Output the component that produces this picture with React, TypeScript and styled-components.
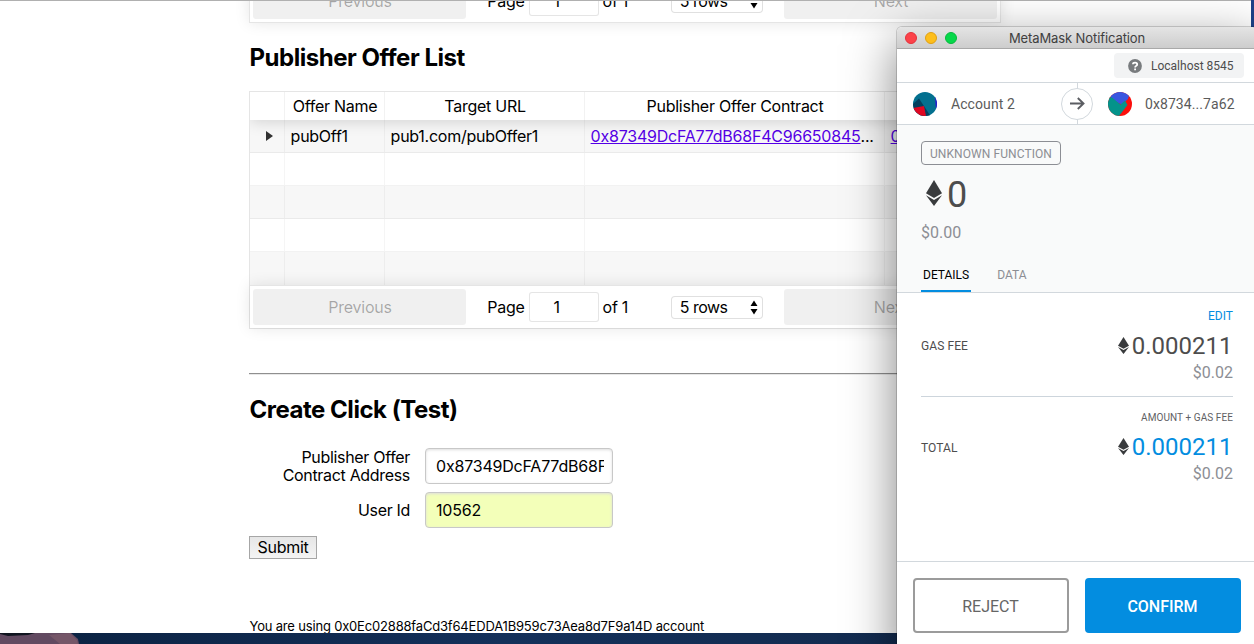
import React from 'react';
import styled, { createGlobalStyle, css } from 'styled-components';

const GlobalStyle = createGlobalStyle`
  * { box-sizing: border-box; }
  html, body { margin: 0; height: 100%; overflow: hidden; }
  body { background: #0b2545; color: #000; }
  button, input { font: inherit; letter-spacing: inherit; color: inherit; }
`;

const Desktop = styled.div`
  position: relative;
  width: 1254px;
  height: 644px;
  overflow: hidden;
  display: flex;
  flex-direction: column;
  background: linear-gradient(180deg, #1d4289 0, #1d4289 40px, #0b2545 620px);
`;

const BrowserPage = styled.main`
  width: 1251px;
  height: 633px;
  flex: none;
  overflow: hidden;
  background: #fff;
  border-top: 1px solid #b0b0b0;
  padding-left: 249px;
  font-family: Inter, 'Liberation Sans', sans-serif;
  font-size: 16px;
  line-height: 18px;
  letter-spacing: -0.26px;
`;

const PreviousTable = styled.div`
  width: 752px;
  height: 22px;
  display: flex;
  flex-direction: column;
  justify-content: flex-end;
`;

const Heading = styled.h2<{ $top: number; $bottom: number }>`
  margin: ${p => p.$top}px 0 ${p => p.$bottom}px;
  padding-left: 0.5px;
  font-size: 24px;
  line-height: 28px;
  font-weight: 700;
  letter-spacing: -0.48px;
`;

const Table = styled.section`
  width: 752px;
  border: 1px solid rgba(0, 0, 0, 0.1);
`;

const TableBody = styled.div`
  overflow: hidden;
`;

const columns = '35px 100px 200px 300px 115px';

const HeaderRow = styled.div`
  position: relative;
  display: grid;
  grid-template-columns: ${columns};
  height: 28px;
  box-shadow: 0 2px 15px rgba(0, 0, 0, 0.15);
`;

const HeaderCell = styled.div`
  padding: 5px 5px 5px 6px;
  text-align: center;
  white-space: nowrap;
  border-right: 1px solid rgba(0, 0, 0, 0.05);
  &:last-child { border-right: 0; }
`;

const BodyRow = styled.div<{ $odd: boolean }>`
  display: grid;
  grid-template-columns: ${columns};
  height: 33px;
  background: ${p => (p.$odd ? 'rgba(0,0,0,.03)' : 'transparent')};
  border-bottom: 1px solid rgba(0, 0, 0, 0.05);
  &:last-child { border-bottom: 0; }
`;

const Cell = styled.div`
  padding: 7px 5px 7px 5.6px;
  overflow: hidden;
  white-space: nowrap;
  text-overflow: ellipsis;
  border-right: 1px solid rgba(0, 0, 0, 0.04);
  &:last-child { border-right: 0; }
`;

const Link = styled.a`
  color: #5500e6;
  text-decoration: underline;
  letter-spacing: -0.22px;
`;

const Expander = styled.span`
  display: block;
  width: 0;
  margin: 4px 0 0 10px;
  border: 5.5px solid transparent;
  border-left: 7px solid rgba(0, 0, 0, 0.8);
  border-right: 0;
`;

const PaginationBar = styled.div<{ $outlined?: boolean }>`
  position: relative;
  display: flex;
  flex: none;
  align-items: stretch;
  height: 43px;
  padding: 3px;
  border-top: 1px solid rgba(0, 0, 0, 0.1);
  box-shadow: 0 0 15px rgba(0, 0, 0, 0.1);
  background: #fff;
  ${p => p.$outlined && css`
    height: 44px;
    border: 1px solid rgba(0, 0, 0, 0.1);
  `}
`;

const PageButton = styled.button`
  flex: 1;
  padding: 0 0 0 1px;
  border: 0;
  border-radius: 3px;
  background: rgba(0, 0, 0, 0.06);
  color: rgba(0, 0, 0, 0.31);
`;

const PageControls = styled.div`
  flex: 1.5;
  display: flex;
  align-items: center;
  justify-content: space-around;
`;

const PageInfo = styled.span`
  display: flex;
  align-items: center;
  gap: 4px;
`;

const PageInput = styled.input`
  width: 70px;
  height: 30px;
  padding: 0 14px 0 0;
  text-align: center;
  background: #fff;
  border: 1px solid rgba(0, 0, 0, 0.1);
  border-radius: 3px;
`;

const RowsSelect = styled.span`
  display: flex;
  align-items: center;
  justify-content: space-between;
  width: 92px;
  height: 23px;
  padding: 0 4px 0 8px;
  background: #fff;
  border: 1px solid rgba(0, 0, 0, 0.12);
  border-radius: 4px;
  letter-spacing: -0.5px;
`;

const Rule = styled.hr`
  width: 752px;
  margin: 44px 0 0;
  border: 0;
  height: 2px;
  border-top: 1px solid #8f8f8f;
  border-bottom: 1px solid #e8e8e8;
`;

const Form = styled.form`
  display: flex;
  flex-direction: column;
  align-items: flex-start;
  gap: 8px;
`;

const Field = styled.label`
  display: flex;
  align-items: center;
  gap: 15px;
  height: 36px;
`;

const FieldLabel = styled.span`
  width: 161px;
  text-align: right;
  letter-spacing: -0.32px;
`;

const TextInput = styled.input<{ $autofilled?: boolean }>`
  width: 188px;
  height: 36px;
  padding: 0 8px 0 10px;
  letter-spacing: -0.2px;
  border: 1px solid #c8c8c8;
  border-radius: 4px;
  background: ${p => (p.$autofilled ? '#f3ffb9' : '#fff')};
  box-shadow: inset 0 1px 3px #ddd;
`;

const SubmitButton = styled.button`
  width: 68px;
  height: 23px;
  padding: 0 0 2px;
  border: 1px solid #a6a6a6;
  background: linear-gradient(#e6e6e6, #f4f4f4);
`;

const AccountNote = styled.p`
  margin: 58px 0 0;
  padding-left: 0.5px;
  font-size: 13px;
  line-height: 18px;
  letter-spacing: -0.18px;
`;

const Wallpaper = styled.svg`
  display: block;
  flex: none;
`;

const Popup = styled.aside`
  position: absolute;
  left: 897px;
  top: 27px;
  width: 360px;
  height: 640px;
  display: flex;
  flex-direction: column;
  background: #fff;
  color: #4d4d4d;
  border-radius: 5px 5px 0 0;
  box-shadow: 0 0 0 1px rgba(0, 0, 0, 0.16), 0 16px 50px rgba(0, 0, 0, 0.5);
  font-family: Roboto, 'Liberation Sans', sans-serif;
`;

const TitleBar = styled.header`
  display: grid;
  grid-template-columns: 60px 1fr 60px;
  align-items: center;
  height: 22px;
  border-radius: 5px 5px 0 0;
  border-bottom: 1px solid #a9a9a9;
  background: linear-gradient(#e4e4e4, #cdcdcd);
  color: #404040;
  text-align: center;
  font: 13px/20px Inter, sans-serif;
  letter-spacing: -0.1px;
`;

const Lights = styled.div`
  display: flex;
  gap: 8px;
  padding-left: 8px;
`;

const Light = styled.span<{ $fill: string; $edge: string }>`
  width: 12px;
  height: 12px;
  border-radius: 50%;
  background: ${p => p.$fill};
  border: 1px solid ${p => p.$edge};
`;

const NetworkBar = styled.div`
  display: flex;
  justify-content: flex-end;
  height: 34px;
  padding: 4px 13px 0 0;
  border-bottom: 1px solid #d2d8dd;
`;

const Network = styled.div`
  display: flex;
  align-items: center;
  gap: 9px;
  width: 130px;
  height: 25px;
  padding-left: 14px;
  padding-top: 1px;
  border-radius: 4px;
  background: #f2f3f4;
  font-size: 12px;
`;

const Accounts = styled.div`
  display: grid;
  grid-template-columns: 164px 32px 164px;
  align-items: center;
  height: 42px;
  border-bottom: 1px solid #d2d8dd;
  font-size: 14px;
  letter-spacing: 0.08px;
  color: #5b5b5b;
`;

const Account = styled.div<{ $pad: number; $gap: number }>`
  display: flex;
  align-items: center;
  gap: ${p => p.$gap}px;
  padding-left: ${p => p.$pad}px;
`;

const Summary = styled.div`
  height: 168px;
  padding: 16px 24px 0;
  display: flex;
  flex-direction: column;
  align-items: flex-start;
  background: #f9fafa;
  border-bottom: 1px solid #d2d8dd;
  color: #8c8e94;
`;

const ActionTag = styled.div`
  width: 140px;
  height: 24px;
  border: 1px solid #8c8e94;
  border-radius: 4px;
  text-align: center;
  font-size: 12px;
  line-height: 24px;
  letter-spacing: 0.08px;
`;

const Amount = styled.div`
  display: flex;
  align-items: center;
  gap: 5px;
  height: 43px;
  margin-top: 8px;
  padding-left: 5px;
  font-size: 36px;
  color: #4d4d4d;
  svg { margin-top: -3px; }
`;

const Fiat = styled.div<{ $top?: number }>`
  font-size: 16px;
  line-height: 20px;
  margin-top: ${p => p.$top || 0}px;
  color: #8c8e94;
`;

const Tabs = styled.nav`
  display: flex;
  gap: 24px;
  margin-top: auto;
`;

const Tab = styled.span<{ $active?: boolean }>`
  height: 28px;
  padding: 0 2px;
  font-size: 12px;
  line-height: 22px;
  color: ${p => (p.$active ? '#000' : '#8c8e94')};
  border-bottom: 2px solid ${p => (p.$active ? '#038de0' : 'transparent')};
`;

const Fees = styled.div`
  flex: none;
  height: 268px;
  padding: 0 24px;
`;

const FeeRow = styled.div<{ $divided?: boolean }>`
  position: relative;
  display: flex;
  justify-content: space-between;
  align-items: center;
  height: ${p => (p.$divided ? 104 : 100)}px;
  font-size: 12px;
  border-bottom: ${p => (p.$divided ? '1px solid #cdd5dc' : '0')};
`;

const FeeLabel = styled.span`
  padding-top: 2px;
  letter-spacing: 0.08px;
`;

const FeeValue = styled.div<{ $top: number }>`
  align-self: flex-start;
  display: flex;
  flex-direction: column;
  align-items: flex-end;
  padding-top: ${p => p.$top}px;
`;

const Edit = styled.a`
  color: #038de0;
  line-height: 14px;
  margin-bottom: 8px;
`;

const FeeCaption = styled.span`
  font-size: 10px;
  line-height: 14px;
  margin-bottom: 7px;
  letter-spacing: 0.08px;
  color: #5f6164;
`;

const Eth = styled.span<{ $blue?: boolean }>`
  display: flex;
  align-items: center;
  gap: 3px;
  height: 30px;
  padding-right: 0.6px;
  font-size: 24px;
  color: ${p => (p.$blue ? '#038de0' : '#4d4d4d')};
  svg { margin-top: -2px; }
`;

const Footer = styled.footer`
  display: flex;
  gap: 16px;
  padding: 16px;
  border-top: 1px solid #d2d8dd;
`;

const ActionButton = styled.button<{ $primary?: boolean }>`
  flex: 1;
  height: 55px;
  padding: 2px 1px 0 0;
  font-size: 16px;
  border-radius: 4px;
  border: 2px solid ${p => (p.$primary ? '#038de0' : '#9b9b9b')};
  background: ${p => (p.$primary ? '#038de0' : '#fff')};
  color: ${p => (p.$primary ? '#fff' : '#656565')};
  font-weight: ${p => (p.$primary ? 500 : 400)};
`;

const EthIcon = ({ w, h }: { w: number; h: number }) => (
  <svg width={w} height={h} viewBox="0 0 16 26" fill="#393b3d" preserveAspectRatio="none">
    <path d="M8 0 16 13.2 8 17.9 0 13.2Z" />
    <path d="M0 15.2 8 19.9 16 15.2 8 26Z" />
  </svg>
);

const Arrows = () => (
  <svg width="8" height="15" viewBox="0 0 8 15">
    <path d="M4 .5 7.5 6H.5ZM.5 9h7L4 14.5Z" />
  </svg>
);

const Pagination = ({ outlined }: { outlined?: boolean }) => (
  <PaginationBar $outlined={outlined}>
    <PageButton disabled>Previous</PageButton>
    <PageControls>
      <PageInfo>Page <PageInput defaultValue="1" /> of 1</PageInfo>
      <RowsSelect>5 rows <Arrows /></RowsSelect>
    </PageControls>
    <PageButton disabled>Next</PageButton>
  </PaginationBar>
);

export default function App() {
  return (
    <Desktop>
      <GlobalStyle />
      <BrowserPage>
        <PreviousTable><Pagination outlined /></PreviousTable>
        <Heading $top={21} $bottom={19}>Publisher Offer List</Heading>
        <Table>
          <TableBody>
            <HeaderRow>
              <HeaderCell />
              <HeaderCell>Offer Name</HeaderCell>
              <HeaderCell>Target URL</HeaderCell>
              <HeaderCell>Publisher Offer Contract</HeaderCell>
              <HeaderCell />
            </HeaderRow>
            <BodyRow $odd>
              <Cell><Expander /></Cell>
              <Cell>pubOff1</Cell>
              <Cell>pub1.com/pubOffer1</Cell>
              <Cell><Link>0x87349DcFA77dB68F4C96650845</Link>...</Cell>
              <Cell><Link>0</Link></Cell>
            </BodyRow>
            {[false, true, false, true].map((odd, i) => (
              <BodyRow key={i} $odd={odd}><Cell /><Cell /><Cell /><Cell /><Cell /></BodyRow>
            ))}
          </TableBody>
          <Pagination />
        </Table>
        <Rule />
        <Heading $top={21} $bottom={24}>Create Click (Test)</Heading>
        <Form>
          <Field>
            <FieldLabel>Publisher Offer Contract Address</FieldLabel>
            <TextInput defaultValue="0x87349DcFA77dB68F4C96650845" />
          </Field>
          <Field>
            <FieldLabel>User Id</FieldLabel>
            <TextInput $autofilled defaultValue="10562" />
          </Field>
          <SubmitButton type="button">Submit</SubmitButton>
        </Form>
        <AccountNote>You are using 0x0Ec02888faCd3f64EDDA1B959c73Aea8d7F9a14D account</AccountNote>
      </BrowserPage>
      <Wallpaper width="1254" height="11" viewBox="0 0 1254 11">
        <defs>
          <linearGradient id="sea">
            <stop offset="0" stopColor="#0a2140" />
            <stop offset=".4" stopColor="#14305a" />
            <stop offset="1" stopColor="#112746" />
          </linearGradient>
        </defs>
        <path fill="url(#sea)" d="M0 0h1254v11H0Z" />
        <path fill="#624a61" d="M0 1 34 0H71L78 6 79 11H0Z" />
        <path fill="#755668" d="M49 2 70 0 77 7 78 11H60Z" />
        <path fill="#101520" d="M0 0H35L28 2 8 3 0 1Z" />
      </Wallpaper>
      <Popup>
        <TitleBar>
          <Lights>
            <Light $fill="#fc4249" $edge="#e3323b" />
            <Light $fill="#fdbe1b" $edge="#e0a012" />
            <Light $fill="#06d84a" $edge="#06b93d" />
          </Lights>
          <span>MetaMask Notification</span>
        </TitleBar>
        <NetworkBar>
          <Network>
            <svg width="14" height="14" viewBox="0 0 14 14">
              <circle cx="7" cy="7" r="6.9" fill="#787b7e" />
              <path d="M4.9 5.3C5 3.2 9.2 3.1 9.2 5.4 9.2 6.9 7.1 6.9 7.1 8.5" fill="none" stroke="#fff" strokeWidth="1.8" />
              <path d="M6.2 9.5h1.8v1.8H6.2Z" fill="#fff" />
            </svg>
            Localhost 8545
          </Network>
        </NetworkBar>
        <Accounts>
          <Account $pad={16} $gap={14}>
            <svg width="24" height="24" viewBox="0 0 24 24">
              <clipPath id="idA"><circle cx="12" cy="12" r="12" /></clipPath>
              <g clipPath="url(#idA)">
                <path fill="#03708f" d="M0 0h24v24H0Z" />
                <path fill="#2a1ad0" d="M22 5 24 5V17L22.8 16Z" />
                <path fill="#04405f" d="M0 12 6 6.5 17.5 24H0Z" />
                <path fill="#df0722" d="M0 16 11 14 13 24H0Z" />
              </g>
            </svg>
            Account 2
          </Account>
          <svg width="32" height="42" viewBox="0 0 32 42" fill="none">
            <path d="M16.5 0v42" stroke="#d2d8dd" />
            <circle cx="16" cy="21" r="15.5" fill="#fff" stroke="#d2d8dd" />
            <path d="M9 20.5H22.5M16.8 15 22.5 20.5 16.8 26" stroke="#5b5d62" strokeWidth="1.9" />
          </svg>
          <Account $pad={15} $gap={13}>
            <svg width="24" height="24" viewBox="0 0 24 24">
              <clipPath id="idB"><circle cx="12" cy="12" r="12" /></clipPath>
              <g clipPath="url(#idB)">
                <path fill="#fb0f0c" d="M0 0h24v24H0Z" />
                <path fill="#3a56e0" d="M2 0H22L20 7 14 12.5 3 8Z" />
                <path fill="#04938a" d="M0 5 4 5.5 12.5 12.5 17 8.5 19.5 13 11 24H0Z" />
              </g>
            </svg>
            0x8734...7a62
          </Account>
        </Accounts>
        <Summary>
          <ActionTag>UNKNOWN FUNCTION</ActionTag>
          <Amount><EthIcon w={16} h={26} />0</Amount>
          <Fiat $top={7}>$0.00</Fiat>
          <Tabs><Tab $active>DETAILS</Tab><Tab>DATA</Tab></Tabs>
        </Summary>
        <Fees>
          <FeeRow $divided>
            <FeeLabel>GAS FEE</FeeLabel>
            <FeeValue $top={16}>
              <Edit>EDIT</Edit>
              <Eth><EthIcon w={11} h={17} />0.000211</Eth>
              <Fiat $top={2}>$0.02</Fiat>
            </FeeValue>
          </FeeRow>
          <FeeRow>
            <FeeLabel>TOTAL</FeeLabel>
            <FeeValue $top={14}>
              <FeeCaption>AMOUNT + GAS FEE</FeeCaption>
              <Eth $blue><EthIcon w={11} h={17} />0.000211</Eth>
              <Fiat $top={2}>$0.02</Fiat>
            </FeeValue>
          </FeeRow>
        </Fees>
        <Footer>
          <ActionButton>REJECT</ActionButton>
          <ActionButton $primary>CONFIRM</ActionButton>
        </Footer>
      </Popup>
    </Desktop>
  );
}
